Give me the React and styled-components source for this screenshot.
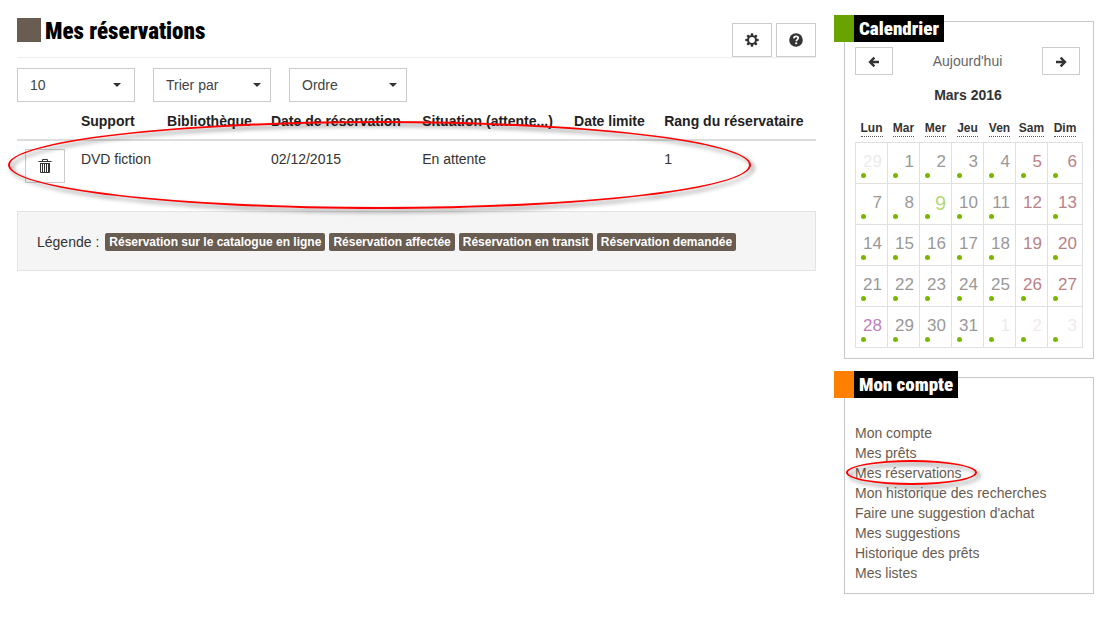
import React from "react";
import styled, { createGlobalStyle, css } from "styled-components";

const Global = createGlobalStyle`
  *, *::before, *::after { box-sizing: border-box; }
  body {
    margin: 0;
    background: #fff;
    color: #333;
    font: 14px/20px "Liberation Sans", Arial, sans-serif;
  }
`;

const headingFont = `"Roboto Condensed", "Liberation Sans Narrow", "DejaVu Sans Condensed", sans-serif`;

const Page = styled.div`
  display: grid;
  grid-template-columns: minmax(0, 1fr) 250px;
  column-gap: 28px;
  align-items: start;
  padding: 15px 10px 24px 17px;
`;

const Main = styled.main``;

const PageHeader = styled.header`
  display: flex;
  justify-content: space-between;
  align-items: flex-end;
  padding-top: 3px;
  border-bottom: 1px solid #eee;
`;

const Title = styled.h1`
  display: flex;
  align-items: flex-start;
  align-self: flex-start;
  gap: 4px;
  margin: 0 0 11px;
  font: 900 23px/28px ${headingFont};
  color: #000;
  white-space: nowrap;

  &::before {
    content: "";
    width: 24px;
    height: 24px;
    background: #695c51;
  }
`;

const Actions = styled.div`
  display: flex;
  gap: 4px;
`;

const IconButton = styled.button`
  display: inline-flex;
  align-items: center;
  justify-content: center;
  width: ${(p) => (p.$compact ? 38 : 40)}px;
  height: ${(p) => (p.$compact ? 28 : 34)}px;
  padding: 0;
  border: 1px solid #ccc;
  background: #fff;
  color: #333;
  vertical-align: top;
`;

const Filters = styled.form`
  display: flex;
  gap: 18px;
  height: 35px;
  margin-top: 10px;
`;

const SelectBox = styled.span`
  position: relative;
  width: 118px;
  height: 34px;

  &::after {
    content: "";
    position: absolute;
    right: ${(p) => p.$caret}px;
    top: 15px;
    border: 4px solid transparent;
    border-top-color: #333;
    border-bottom: 0;
    pointer-events: none;
  }
`;

const Select = styled.select`
  appearance: none;
  width: 100%;
  height: 100%;
  padding: 0 24px 0 12px;
  border: 1px solid #ccc;
  border-radius: 0;
  background: #fff;
  color: #444;
  font: inherit;
`;

const TableWrap = styled.div`
  position: relative;
  margin-bottom: 20px;
`;

const Table = styled.table`
  width: 100%;
  table-layout: fixed;
  border-collapse: collapse;
`;

const Th = styled.th`
  width: ${(p) => p.$width};
  padding: 8px;
  border-bottom: 2px solid #ddd;
  color: #222;
  text-align: left;
  white-space: nowrap;
`;

const Td = styled.td`
  padding: 8px;
  vertical-align: top;
  white-space: nowrap;
`;

const Highlight = styled.span`
  position: absolute;
  left: ${(p) => p.$left}px;
  top: ${(p) => p.$top}px;
  width: ${(p) => p.$width}px;
  height: ${(p) => p.$height}px;
  border: 2px solid #f00;
  border-radius: 50%;
  filter: drop-shadow(3px 3px 2px rgba(0, 0, 0, 0.55));
  pointer-events: none;
`;

const Legend = styled.section`
  display: flex;
  flex-wrap: wrap;
  align-items: center;
  gap: 4px;
  padding: 20px 19px 18px;
  border: 1px solid #e3e3e3;
  background: #f5f5f5;
`;

const LegendLabel = styled.span`
  margin-right: 2px;
`;

const Tag = styled.span`
  padding: 0 4px;
  border-radius: 2px;
  background: #695c51;
  color: #fff;
  font-size: 12px;
  font-weight: 700;
  line-height: 18px;
`;

const Side = styled.aside`
  display: grid;
  gap: 18px;
  padding-top: 6px;
`;

const Panel = styled.section`
  position: relative;
  padding: ${(p) => p.$top}px 10px 10px;
  border: 1px solid #c3c8ca;
`;

const PanelTitle = styled.h2`
  position: absolute;
  left: -11px;
  top: -7px;
  height: 27px;
  margin: 0;
  padding: 0 5px;
  border-left: 20px solid ${(p) => p.$accent};
  background: #000;
  color: #fff;
  font: 900 19px/27px ${headingFont};
  white-space: nowrap;
`;

const CalendarNav = styled.nav`
  display: flex;
  justify-content: space-between;
  align-items: center;
  padding-right: 3px;
`;

const Link = styled.a`
  color: #695c51;
  text-decoration: none;
`;

const TodayLink = styled(Link)`
  color: #666;
`;

const Month = styled.h3`
  margin: 10px 0 16px;
  padding-right: 2px;
  font-size: 14px;
  line-height: 20px;
  text-align: center;
`;

const Calendar = styled.table`
  width: 100%;
  table-layout: fixed;
  border-collapse: collapse;
`;

const Weekday = styled.th`
  height: 21px;
  padding: 0;
  font-size: 12px;
  line-height: 15px;
  vertical-align: top;

  &:not(:last-child) { width: 32px; }

  abbr {
    display: inline-block;
    border-bottom: 1px dotted #555;
    text-decoration: none;
  }
`;

const dayKinds = {
  week: css`color: #999;`,
  weekend: css`color: #b98287;`,
  holiday: css`color: #c07fc0;`,
  today: css`color: #b4d977; font-size: 20px;`,
  outside: css`color: #ececec;`,
  outsideWeekend: css`color: #f4eaea;`,
};

const Day = styled.td`
  position: relative;
  height: 41px;
  padding: 9px 5px 0 0;
  border: 1px solid #e0e0e0;
  font-size: 17px;
  line-height: 20px;
  text-align: right;
  vertical-align: top;
  ${(p) => dayKinds[p.$kind]}
`;

const Dot = styled.i`
  position: absolute;
  left: 5px;
  bottom: 5px;
  width: 5px;
  height: 5px;
  border-radius: 50%;
  background: #76b900;
`;

const Menu = styled.ul`
  margin: 0;
  padding: 0;
  list-style: none;
`;

const MenuItem = styled.li`
  position: relative;
`;

const GearIcon = () => (
  <svg width="14" height="14" viewBox="0 0 14 14" aria-hidden="true">
    <g fill="currentColor">
      {[0, 45, 90, 135].map((a) => (
        <path key={a} d="M5.9 0.3h2.2l.4 3h-3zM5.9 13.7h2.2l.4-3h-3z" transform={`rotate(${a} 7 7)`} />
      ))}
    </g>
    <circle cx="7" cy="7" r="3.9" fill="#fff" stroke="currentColor" strokeWidth="1.9" />
  </svg>
);

const HelpIcon = () => (
  <svg width="14" height="14" viewBox="0 0 14 14" aria-hidden="true">
    <circle cx="7" cy="7" r="6.8" fill="currentColor" />
    <path d="M4.8 5.4C4.9 3.9 5.9 3.3 7.1 3.3c1.3 0 2.2.7 2.2 1.8 0 1.5-2.1 1.5-2.1 3.2" fill="none" stroke="#fff" strokeWidth="1.7" />
    <path d="M6.2 9.4h2v1.8h-2z" fill="#fff" />
  </svg>
);

const TrashIcon = () => (
  <svg width="14" height="16" viewBox="0 0 14 16" fill="none" stroke="currentColor" aria-hidden="true">
    <path d="M0.5 3.5h13M4.5 3v-1.5h5v1.5M2.5 5v9.5h9V5M2 5.5h10M4.5 5v9M6.5 5v9M8.5 5v9M10.5 5v9" />
  </svg>
);

const ArrowIcon = ({ right }) => (
  <svg width="12" height="14" viewBox="0 0 12 14" fill="none" stroke="currentColor" strokeWidth="2.4" aria-hidden="true">
    <path d={right ? "M1 8h8.5M5.6 3.6L10 8l-4.4 4.4" : "M11 8H2.5M6.4 3.6L2 8l4.4 4.4"} />
  </svg>
);

const filters = [
  { label: "Nombre par page", value: "10", caret: 14 },
  { label: "Critère de tri", value: "Trier par", caret: 10 },
  { label: "Ordre de tri", value: "Ordre", caret: 10 },
];

const columns = [
  ["", "7%"],
  ["Support", "86px"],
  ["Bibliothèque", "13%"],
  ["Date de réservation", "151px"],
  ["Situation (attente...)", "19%"],
  ["Date limite", "90px"],
  ["Rang du réservataire", "20%"],
];

const tags = [
  "Réservation sur le catalogue en ligne",
  "Réservation affectée",
  "Réservation en transit",
  "Réservation demandée",
];

const weekdays = [
  ["Lun", "Lundi"], ["Mar", "Mardi"], ["Mer", "Mercredi"], ["Jeu", "Jeudi"],
  ["Ven", "Vendredi"], ["Sam", "Samedi"], ["Dim", "Dimanche"],
];

const weeks = [
  [29, 1, 2, 3, 4, 5, 6],
  [7, 8, 9, 10, 11, 12, 13],
  [14, 15, 16, 17, 18, 19, 20],
  [21, 22, 23, 24, 25, 26, 27],
  [28, 29, 30, 31, 1, 2, 3],
];

const closedDays = [12, 19];

function dayKind(week, col, day) {
  const weekend = col > 4;
  if ((week === 0 && day > 20) || (week === 4 && day < 10)) return weekend ? "outsideWeekend" : "outside";
  if (day === 9) return "today";
  if (day === 28) return "holiday";
  return weekend ? "weekend" : "week";
}

const menu = [
  "Mon compte", "Mes prêts", "Mes réservations", "Mon historique des recherches",
  "Faire une suggestion d'achat", "Mes suggestions", "Historique des prêts", "Mes listes",
];

export default function App() {
  return (
    <>
      <Global />
      <Page>
        <Main>
          <PageHeader>
            <Title>Mes réservations</Title>
            <Actions>
              <IconButton type="button" aria-label="Paramètres"><GearIcon /></IconButton>
              <IconButton type="button" aria-label="Aide"><HelpIcon /></IconButton>
            </Actions>
          </PageHeader>

          <Filters>
            {filters.map((f) => (
              <SelectBox key={f.label} $caret={f.caret}>
                <Select aria-label={f.label} defaultValue={f.value}>
                  <option>{f.value}</option>
                </Select>
              </SelectBox>
            ))}
          </Filters>

          <TableWrap>
            <Table>
              <thead>
                <tr>{columns.map(([name, width]) => <Th key={name} $width={width}>{name}</Th>)}</tr>
              </thead>
              <tbody>
                <tr>
                  <Td><IconButton type="button" aria-label="Supprimer"><TrashIcon /></IconButton></Td>
                  <Td>DVD fiction</Td>
                  <Td />
                  <Td>02/12/2015</Td>
                  <Td>En attente</Td>
                  <Td />
                  <Td>1</Td>
                </tr>
              </tbody>
            </Table>
            <Highlight $left={-9} $top={18} $width={743} $height={88} />
          </TableWrap>

          <Legend>
            <LegendLabel>Légende :</LegendLabel>
            {tags.map((t) => <Tag key={t}>{t}</Tag>)}
          </Legend>
        </Main>

        <Side>
          <Panel $top={25}>
            <PanelTitle $accent="#69a300">Calendrier</PanelTitle>
            <CalendarNav>
              <IconButton $compact type="button" aria-label="Mois précédent"><ArrowIcon /></IconButton>
              <TodayLink href="#today">Aujourd'hui</TodayLink>
              <IconButton $compact type="button" aria-label="Mois suivant"><ArrowIcon right /></IconButton>
            </CalendarNav>
            <Month>Mars 2016</Month>
            <Calendar>
              <thead>
                <tr>
                  {weekdays.map(([short, full]) => (
                    <Weekday key={short}><abbr title={full}>{short}</abbr></Weekday>
                  ))}
                </tr>
              </thead>
              <tbody>
                {weeks.map((days, w) => (
                  <tr key={w}>
                    {days.map((day, c) => (
                      <Day key={c} $kind={dayKind(w, c, day)}>
                        {day}
                        {!closedDays.includes(day) && <Dot />}
                      </Day>
                    ))}
                  </tr>
                ))}
              </tbody>
            </Calendar>
          </Panel>

          <Panel $top={45}>
            <PanelTitle $accent="#ff7f00">Mon compte</PanelTitle>
            <Menu>
              {menu.map((item) => (
                <MenuItem key={item}>
                  <Link href="#compte">{item}</Link>
                  {item === "Mes réservations" && (
                    <Highlight $left={-9} $top={-3} $width={131} $height={25} />
                  )}
                </MenuItem>
              ))}
            </Menu>
          </Panel>
        </Side>
      </Page>
    </>
  );
}
